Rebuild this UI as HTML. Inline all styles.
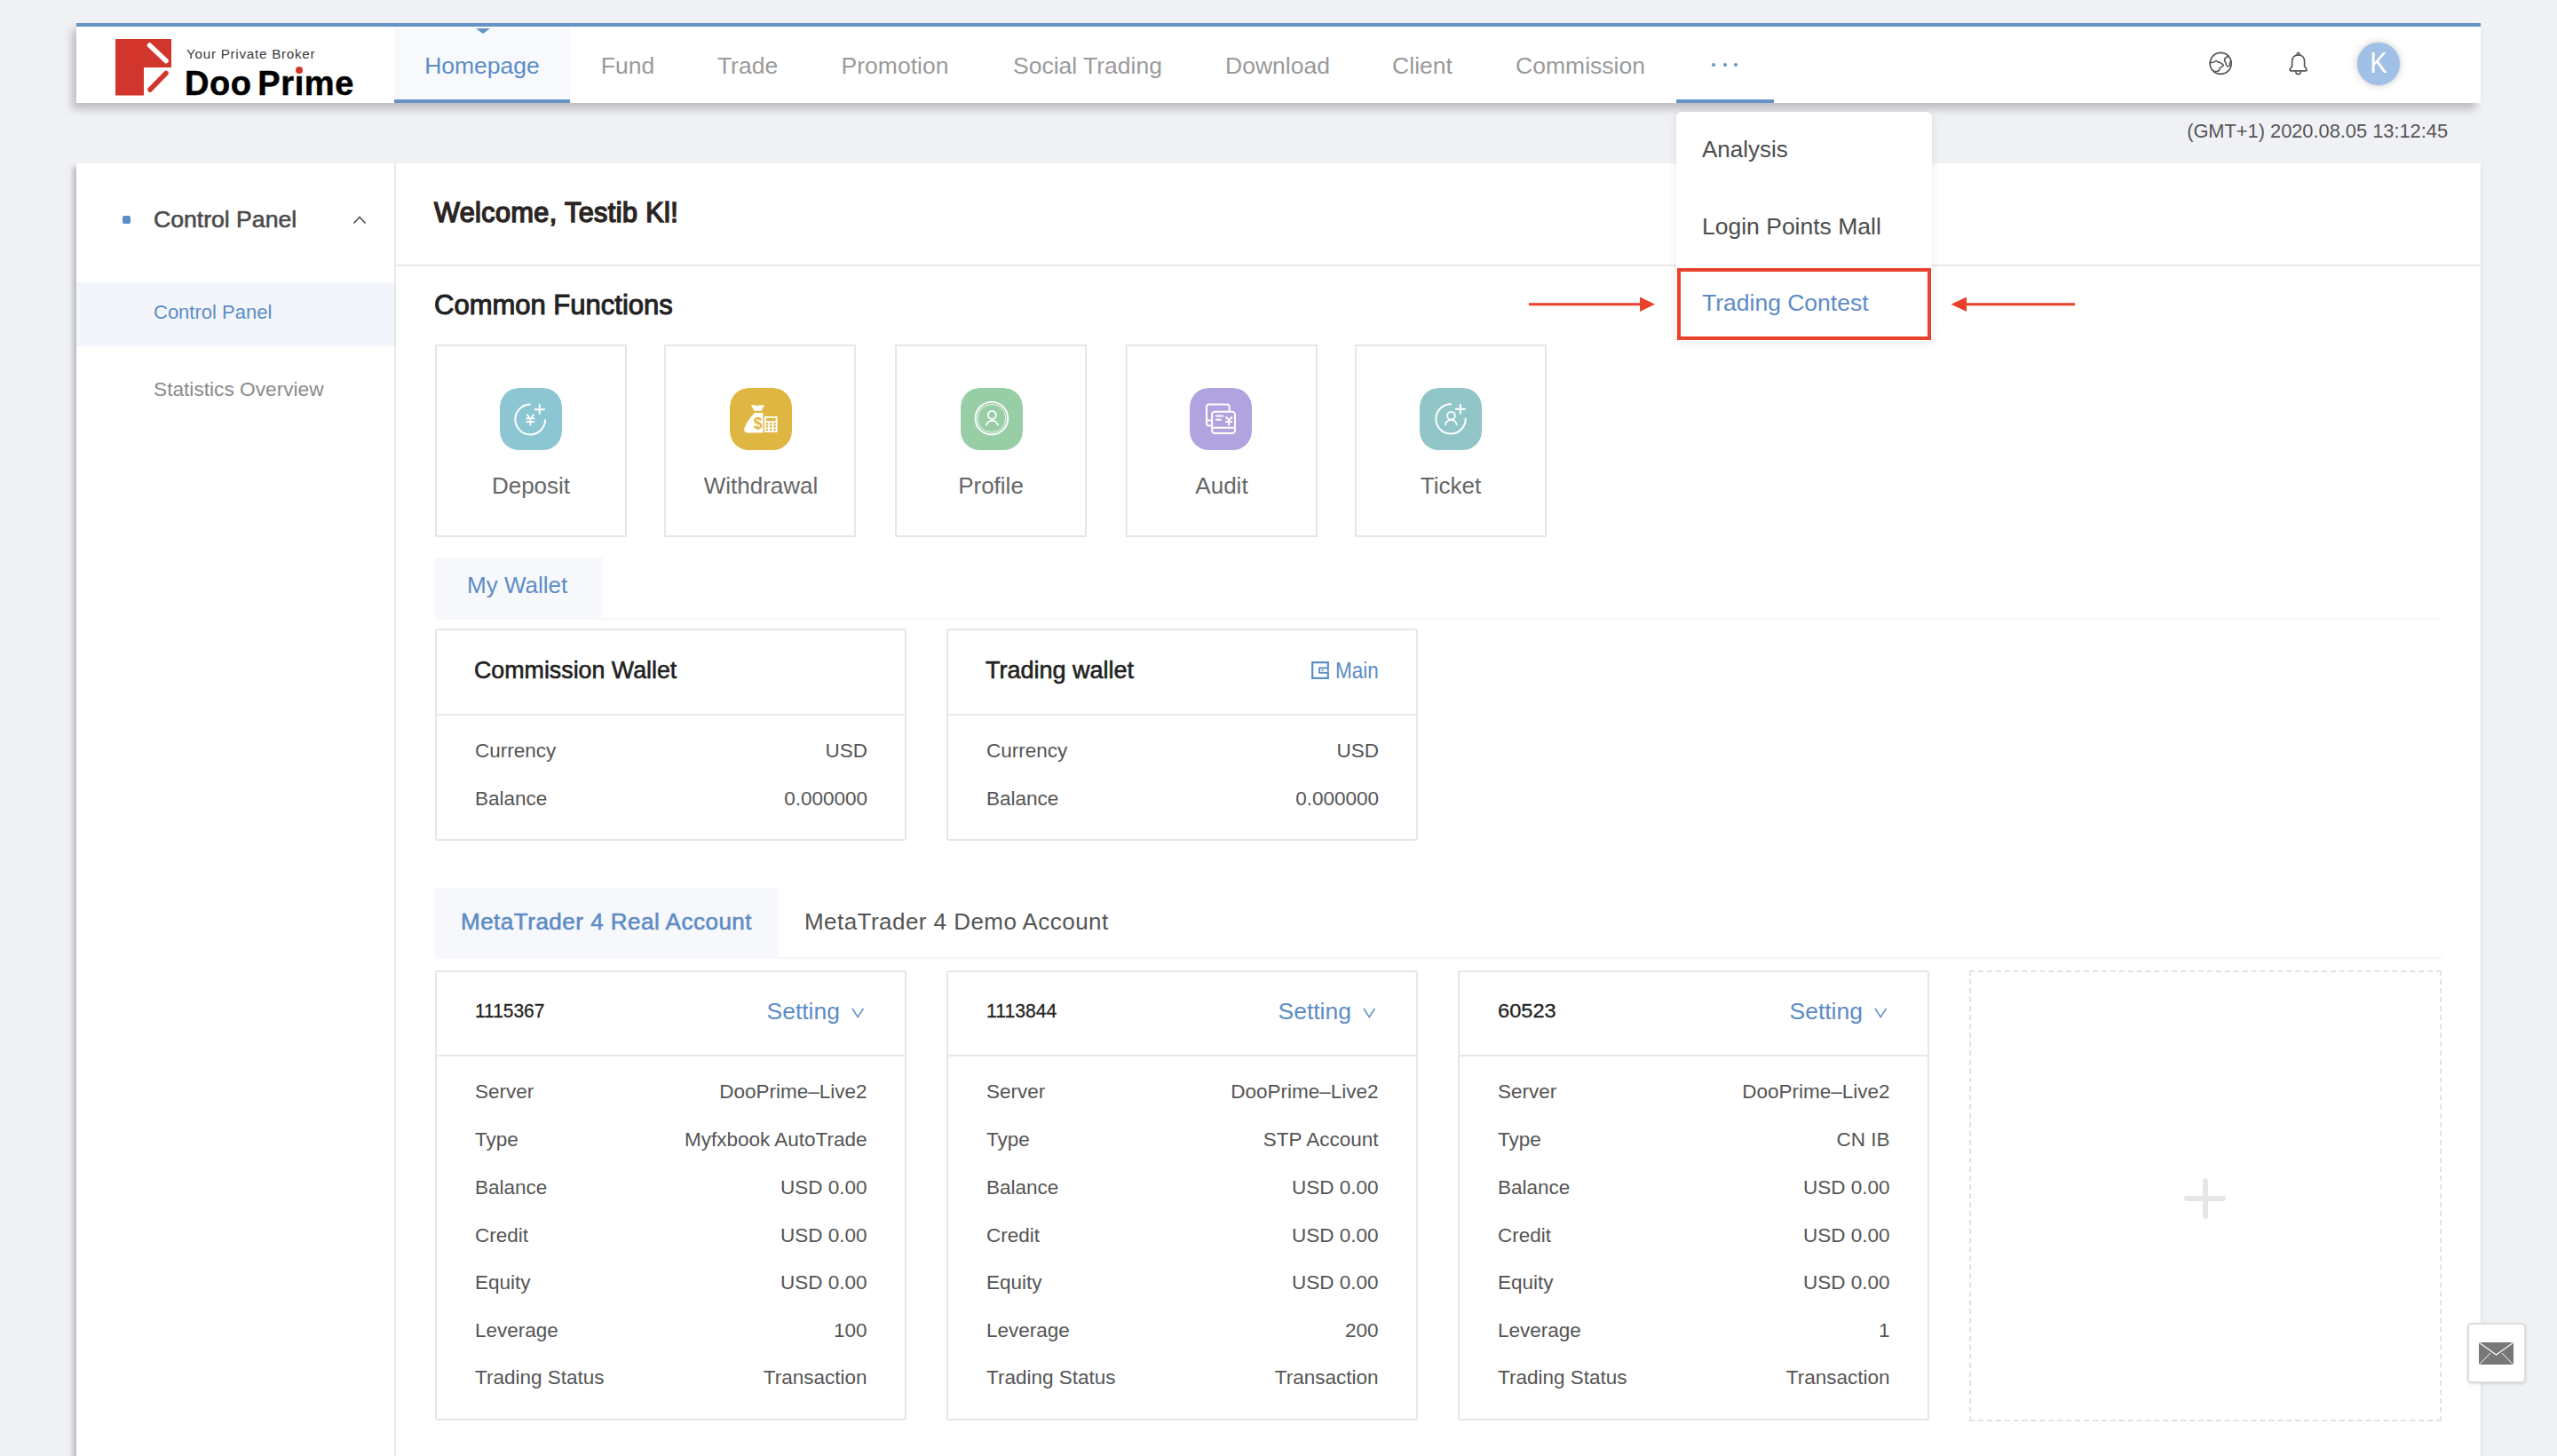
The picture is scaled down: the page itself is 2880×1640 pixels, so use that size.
<!DOCTYPE html>
<html><head><meta charset="utf-8">
<style>
html,body{margin:0;padding:0;}
body{width:2880px;height:1640px;overflow:hidden;background:#f0f1f5;position:relative;font-family:"Liberation Sans",sans-serif;}
.a{position:absolute;}
.t{position:absolute;white-space:nowrap;line-height:1;}
.c{text-align:center;}
.r{text-align:right;}
#hdr{left:86px;top:26px;width:2708px;height:86px;border-top:4px solid #6493c5;background:#fff;box-shadow:-5px 7px 9px rgba(0,0,0,0.21);}
#panel{left:86px;top:184px;width:2708px;height:1500px;background:#fff;box-shadow:-5px 3px 5px -1px rgba(0,0,0,0.22),3px 3px 4px -1px rgba(0,0,0,0.05);}
.nav{font-size:26.5px;color:#9a9a9a;}
.card{position:absolute;border:2px solid #e6e6e6;box-sizing:border-box;background:#fff;}
.ic{position:absolute;width:70px;height:70px;border-radius:21px;}
.lbl{font-size:26px;color:#666;}
.row{font-size:22.5px;color:#555;}
.blue{color:#5d8cc5 !important;}
</style></head><body>

<!-- HEADER -->
<div id="hdr" class="a"></div>
<!-- homepage active tab -->
<div class="a" style="left:444px;top:32px;width:198px;height:84px;background:#f7f9fd;"></div>
<div class="a" style="left:444px;top:112px;width:198px;height:4px;background:#6493c5;"></div>
<div class="a" style="left:536px;top:32px;width:0;height:0;border-left:8px solid transparent;border-right:8px solid transparent;border-top:6px solid #6493c5;"></div>
<div class="a" style="left:1888px;top:112px;width:110px;height:4px;background:#6493c5;"></div>

<div class="t c nav blue" style="left:343px;width:400px;top:61px;">Homepage</div>
<div class="t c nav" style="left:507px;width:400px;top:61px;">Fund</div>
<div class="t c nav" style="left:642px;width:400px;top:61px;">Trade</div>
<div class="t c nav" style="left:808px;width:400px;top:61px;">Promotion</div>
<div class="t c nav" style="left:1025px;width:400px;top:61px;">Social Trading</div>
<div class="t c nav" style="left:1239px;width:400px;top:61px;">Download</div>
<div class="t c nav" style="left:1402px;width:400px;top:61px;">Client</div>
<div class="t c nav" style="left:1580px;width:400px;top:61px;">Commission</div>
<!-- dots -->
<div class="a" style="left:1928px;top:71px;width:4px;height:4px;border-radius:2px;background:#6493c5;"></div>
<div class="a" style="left:1940.5px;top:71px;width:4px;height:4px;border-radius:2px;background:#6493c5;"></div>
<div class="a" style="left:1953.3px;top:71px;width:4px;height:4px;border-radius:2px;background:#6493c5;"></div>

<!-- logo -->
<svg class="a" style="left:128px;top:42px;" width="70" height="70" viewBox="128 42 70 70">
  <path d="M130 44 H193 V76 H162 V107.5 H130 Z" fill="#d2352c"/>
  <line x1="168.5" y1="51" x2="187" y2="68.5" stroke="#fff" stroke-width="5.5" stroke-linecap="round"/>
  <line x1="187" y1="82.5" x2="169" y2="101" stroke="#d2352c" stroke-width="5.5" stroke-linecap="round"/>
</svg>
<div class="t" style="left:210px;top:52.6px;font-size:15.2px;color:#3a3a3a;letter-spacing:0.75px;">Your Private Broker</div>
<div class="t" style="left:208px;top:75px;font-size:38px;font-weight:700;color:#000;letter-spacing:0.6px;word-spacing:-4.5px;-webkit-text-stroke:0.5px #000;">Doo Pr&#305;me</div>
<div class="a" style="left:332.5px;top:75px;width:8px;height:8px;border-radius:50%;background:#d2352c;"></div>

<!-- right icons -->
<svg class="a" style="left:2486px;top:57px;" width="30" height="30" viewBox="0 0 30 30">
  <circle cx="15.2" cy="14.4" r="12" fill="none" stroke="#555" stroke-width="1.7"/>
  <path d="M3.4 13.2 C5.5 13.6 7.6 13.6 8.8 12.2 C9.6 11.4 10.6 11.2 11.3 12.4 C11.9 13.4 12.6 13.3 13.4 13 C14.2 12.8 15 13.8 15.6 14.4 C16.4 15.1 17.6 15.2 18.3 16.4 C18.6 17.2 17.2 17.9 16.2 18.2 C14.9 18.5 14.2 19.4 14 20.8 C13.8 22.4 12.4 23.2 10.4 23.4 C9 23.5 8 23.3 7 22.8" fill="none" stroke="#555" stroke-width="1.5" stroke-linejoin="round" stroke-linecap="round"/>
  <path d="M23.8 6.3 C21.9 7.1 19.9 8.6 19.5 10.2 C19.2 11.6 19.9 12.6 20.8 13.6 C21.6 14.4 21.1 15.6 21.6 16.6 C22.2 17.6 23.6 17.9 24.8 17.2 C25.6 16.6 25.4 14.8 25.5 13.6 C25.6 12.4 26.4 12 26.9 11.6" fill="none" stroke="#555" stroke-width="1.5" stroke-linejoin="round" stroke-linecap="round"/>
</svg>
<svg class="a" style="left:2576px;top:57px;" width="26" height="30" viewBox="0 0 26 30">
  <circle cx="12.6" cy="3.6" r="1.4" fill="none" stroke="#555" stroke-width="1.4"/>
  <path d="M5.6 17.6 V12 C5.6 7.6 8.4 4.8 12.6 4.8 C16.8 4.8 19.6 7.6 19.6 12 V17.6 L21.6 20.4 C22.6 21.8 22 22.9 20.6 22.9 H4.6 C3.2 22.9 2.6 21.8 3.6 20.4 Z" fill="none" stroke="#555" stroke-width="1.7" stroke-linejoin="round"/>
  <path d="M9.6 23.4 C9.8 25.6 11.2 26.6 12.6 26.6 C14 26.6 15.4 25.6 15.6 23.4" fill="none" stroke="#555" stroke-width="1.5"/>
</svg>
<div class="a" style="left:2655px;top:48px;width:48px;height:48px;border-radius:50%;background:#a0c0e6;box-shadow:0 0 0 1px #e0e0e0,0 0 8px 1px rgba(0,0,0,0.16);"></div>
<div class="t c" style="left:2579px;width:200px;top:54.5px;font-size:32.5px;color:#fff;transform:scaleX(0.9);">K</div>

<div class="t r" style="right:123px;top:137px;font-size:21.8px;color:#555;">(GMT+1) 2020.08.05 13:12:45</div>

<!-- PANEL -->
<div id="panel" class="a"></div>
<div class="a" style="left:444px;top:184px;width:2px;height:1456px;background:#e8e8e8;"></div>
<div class="a" style="left:86px;top:318px;width:358px;height:72px;background:#f2f6fa;"></div>
<div class="a" style="left:138px;top:243px;width:9px;height:9px;border-radius:2px;background:#5b8ec8;"></div>
<div class="t" style="left:173px;top:234px;font-size:26.6px;color:#4a4a4a;-webkit-text-stroke:0.6px #4a4a4a;">Control Panel</div>
<svg class="a" style="left:396px;top:240px;" width="18" height="14" viewBox="0 0 18 14"><path d="M2.5 11.5 L9 4.5 L15.5 11.5" fill="none" stroke="#555" stroke-width="1.8"/></svg>
<div class="t blue" style="left:173px;top:341px;font-size:22px;">Control Panel</div>
<div class="t" style="left:173px;top:427px;font-size:22.7px;color:#8a8a8a;">Statistics Overview</div>

<div class="t" style="left:489px;top:224px;font-size:30.5px;letter-spacing:0.45px;color:#2b2523;-webkit-text-stroke:1.5px #2b2523;">Welcome, Testib Kl!</div>
<div class="a" style="left:446px;top:298px;width:2348px;height:2px;background:#e8e8e8;"></div>
<div class="t" style="left:489px;top:328px;font-size:31px;color:#222;-webkit-text-stroke:1px #222;">Common Functions</div>

<!-- function cards -->
<div class="card" style="left:490px;top:388px;width:216px;height:217px;"></div>
<div class="card" style="left:748px;top:388px;width:216px;height:217px;"></div>
<div class="card" style="left:1008px;top:388px;width:216px;height:217px;"></div>
<div class="card" style="left:1268px;top:388px;width:216px;height:217px;"></div>
<div class="card" style="left:1526px;top:388px;width:216px;height:217px;"></div>
<svg class="ic" style="left:563px;top:437px;" width="70" height="70" viewBox="0 0 70 70"><rect width="70" height="70" rx="21" fill="#8cc6d2"/>
 <g fill="none" stroke="#fff" stroke-width="2">
  <path d="M34.5 18.6 A16.9 16.9 0 1 0 51.1 35.4"/>
  <path d="M44.7 18.2 V29.7 M39 24.2 H50.8"/>
  <path d="M30.4 29.4 L34.3 35 L38.3 29.4 M34.3 35 V42.2 M29.4 34.4 H39.3 M29.4 38.2 H39.3" stroke-width="1.7"/>
 </g></svg>
<svg class="ic" style="left:822px;top:437px;" width="70" height="70" viewBox="0 0 70 70"><rect width="70" height="70" rx="21" fill="#dfb641"/>
 <path d="M23.9 19.6 C26.5 18.6 28.5 19.6 31.4 19.9 C34.4 19.6 36.4 18.6 38.9 19.6 L35.4 25.8 H27.4 Z" fill="#fff"/>
 <path d="M28 28 H36.4 C37 28 37.4 28.6 37.4 29.2 V50.6 H20 C16.6 50.6 15.4 47 16.8 44 C19 39 23 33 28 28 Z" fill="#fff"/>
 <text x="31.6" y="46.3" font-family="Liberation Sans" font-weight="700" font-size="17.5" fill="#dfb641" text-anchor="middle">$</text>
 <rect x="38.9" y="32" width="14.7" height="18" fill="#fff"/>
 <rect x="40.8" y="33.8" width="10.9" height="3.5" fill="#dfb641"/>
 <g fill="#dfb641"><circle cx="41.9" cy="40.2" r="1.3"/><circle cx="46.2" cy="40.2" r="1.3"/><circle cx="50.6" cy="40.2" r="1.3"/>
 <circle cx="41.9" cy="43.6" r="1.3"/><circle cx="46.2" cy="43.6" r="1.3"/><circle cx="50.6" cy="43.6" r="1.3"/>
 <circle cx="41.9" cy="47" r="1.3"/><circle cx="46.2" cy="47" r="1.3"/><circle cx="50.6" cy="47" r="1.3"/></g>
</svg>
<svg class="ic" style="left:1082px;top:437px;" width="70" height="70" viewBox="0 0 70 70"><rect width="70" height="70" rx="21" fill="#98cea6"/>
 <g fill="none" stroke="#fff">
  <circle cx="34.9" cy="34.2" r="18.3" stroke-width="1.9"/>
  <circle cx="34.9" cy="34.2" r="15.9" stroke-width="1" stroke-opacity="0.85"/>
  <circle cx="35.4" cy="30.4" r="4.5" stroke-width="1.8"/>
  <path d="M28.7 42.4 A6.8 6.8 0 0 1 42.1 42.4" stroke-width="1.8"/>
 </g></svg>
<svg class="ic" style="left:1340px;top:437px;" width="70" height="70" viewBox="0 0 70 70"><rect width="70" height="70" rx="21" fill="#b1a3df"/>
 <g fill="none" stroke="#fff" stroke-width="2">
  <path d="M25.1 42.4 H22 C20.2 42.4 19 41.2 19 39.4 V21.5 C19 19.7 20.2 18.5 22 18.5 H41.7 C43.5 18.5 44.7 19.7 44.7 21.5 V26.8"/>
  <path d="M19 36.6 H25.1"/>
  <rect x="25.1" y="26.8" width="25.9" height="24.3" rx="3.2" fill="#b1a3df"/>
  <path d="M25.1 44.8 H51"/>
  <path d="M29.2 31.4 H37.8 M29.2 35.8 H35.7"/>
  <path d="M40.4 32.4 L44.1 36.2 L48.1 32.4 M44.1 36.2 V42.6 M40.2 38 H48"/>
 </g></svg>
<svg class="ic" style="left:1599px;top:437px;" width="70" height="70" viewBox="0 0 70 70"><rect width="70" height="70" rx="21" fill="#92c5c8"/>
 <g fill="none" stroke="#fff" stroke-width="2">
  <path d="M35.8 18.2 A16.7 16.7 0 1 0 51.7 34"/>
  <path d="M45.9 17.9 V29.4 M40.1 23.7 H51.7"/>
  <circle cx="35.5" cy="31.2" r="4.4" stroke-width="1.8"/>
  <path d="M28.9 42.2 A6.45 6.45 0 0 1 41.8 42.2" stroke-width="1.8"/>
 </g></svg>
<div class="t c lbl" style="left:398px;width:400px;top:534px;">Deposit</div>
<div class="t c lbl" style="left:657px;width:400px;top:534px;">Withdrawal</div>
<div class="t c lbl" style="left:916px;width:400px;top:534px;">Profile</div>
<div class="t c lbl" style="left:1176px;width:400px;top:534px;">Audit</div>
<div class="t c lbl" style="left:1434px;width:400px;top:534px;">Ticket</div>

<!-- my wallet tab -->
<div class="a" style="left:490px;top:628px;width:188px;height:70px;background:#f7f8fc;"></div>
<div class="a" style="left:678px;top:696px;width:2072px;height:2px;background:#f4f5f9;"></div>
<div class="t blue" style="left:526px;top:646px;font-size:26px;">My Wallet</div>

<!-- wallet cards -->
<div class="card" style="left:490px;top:708px;width:531px;height:239px;border-radius:3px;"></div>
<div class="card" style="left:1066px;top:708px;width:531px;height:239px;border-radius:3px;"></div>
<div class="a" style="left:492px;top:804px;width:527px;height:2px;background:#e8e8e8;"></div>
<div class="a" style="left:1068px;top:804px;width:527px;height:2px;background:#e8e8e8;"></div>
<div class="t" style="left:534px;top:742px;font-size:26.8px;color:#222;-webkit-text-stroke:0.6px #222;">Commission Wallet</div>
<div class="t" style="left:1110px;top:742px;font-size:27px;color:#222;-webkit-text-stroke:0.6px #222;">Trading wallet</div>
<svg class="a" style="left:1476px;top:744px;" width="22" height="22" viewBox="0 0 22 22"><path d="M19.8 8.4 V2.2 H2.2 V19.8 H19.8 V13.8" fill="none" stroke="#5b8ec8" stroke-width="2.2"/><rect x="10" y="8.4" width="9.8" height="5.4" fill="none" stroke="#5b8ec8" stroke-width="1.8"/><rect x="12.6" y="10.3" width="2" height="1.6" fill="#5b8ec8"/></svg>
<div class="t blue" style="left:1504px;top:742px;font-size:26px;transform:scaleX(0.865);transform-origin:0 0;">Main</div>

<div class="t row" style="left:535px;top:835px;">Currency</div>
<div class="t row" style="left:535px;top:889px;">Balance</div>
<div class="t row r" style="right:1903px;top:835px;">USD</div>
<div class="t row r" style="right:1903px;top:889px;">0.000000</div>
<div class="t row" style="left:1111px;top:835px;">Currency</div>
<div class="t row" style="left:1111px;top:889px;">Balance</div>
<div class="t row r" style="right:1327px;top:835px;">USD</div>
<div class="t row r" style="right:1327px;top:889px;">0.000000</div>

<!-- MT4 tabs -->
<div class="a" style="left:490px;top:1000px;width:386px;height:80px;background:#f7f8fc;"></div>
<div class="a" style="left:876px;top:1078px;width:1874px;height:2px;background:#f3f4f8;"></div>
<div class="t blue" style="left:519px;top:1025px;font-size:26px;letter-spacing:0.5px;-webkit-text-stroke:0.6px #5d8cc5;">MetaTrader 4 Real Account</div>
<div class="t" style="left:906px;top:1025px;font-size:26px;letter-spacing:0.45px;color:#555;">MetaTrader 4 Demo Account</div>

<div id="accts"></div>
<div class="card" style="left:490px;top:1093px;width:531px;height:507px;border-radius:3px;"></div>
<div class="a" style="left:492px;top:1188px;width:527px;height:2px;background:#e8e8e8;"></div>
<div class="t" style="left:535px;top:1128px;font-size:22.5px;color:#222;-webkit-text-stroke:0.3px #222;transform:scaleX(0.93);transform-origin:0 0;">1115367</div>
<div class="t r blue" style="right:1934px;top:1126px;font-size:26.5px;">Setting</div>
<svg class="a" style="left:958px;top:1133px;" width="18" height="16" viewBox="0 0 18 16"><path d="M2 3 L8.2 12.6 L14.4 3" fill="none" stroke="#5d8cc5" stroke-width="1.5"/></svg>
<div class="t row" style="left:535px;top:1219.0px;">Server</div>
<div class="t row r" style="right:1903.5px;top:1219.0px;">DooPrime&ndash;Live2</div>
<div class="t row" style="left:535px;top:1273.2px;">Type</div>
<div class="t row r" style="right:1903.5px;top:1273.2px;">Myfxbook AutoTrade</div>
<div class="t row" style="left:535px;top:1327.0px;">Balance</div>
<div class="t row r" style="right:1903.5px;top:1327.0px;">USD 0.00</div>
<div class="t row" style="left:535px;top:1380.5px;">Credit</div>
<div class="t row r" style="right:1903.5px;top:1380.5px;">USD 0.00</div>
<div class="t row" style="left:535px;top:1434.0px;">Equity</div>
<div class="t row r" style="right:1903.5px;top:1434.0px;">USD 0.00</div>
<div class="t row" style="left:535px;top:1487.5px;">Leverage</div>
<div class="t row r" style="right:1903.5px;top:1487.5px;">100</div>
<div class="t row" style="left:535px;top:1541.0px;">Trading Status</div>
<div class="t row r" style="right:1903.5px;top:1541.0px;">Transaction</div>
<div class="card" style="left:1066px;top:1093px;width:531px;height:507px;border-radius:3px;"></div>
<div class="a" style="left:1068px;top:1188px;width:527px;height:2px;background:#e8e8e8;"></div>
<div class="t" style="left:1111px;top:1128px;font-size:22.5px;color:#222;-webkit-text-stroke:0.3px #222;transform:scaleX(0.94);transform-origin:0 0;">1113844</div>
<div class="t r blue" style="right:1358px;top:1126px;font-size:26.5px;">Setting</div>
<svg class="a" style="left:1534px;top:1133px;" width="18" height="16" viewBox="0 0 18 16"><path d="M2 3 L8.2 12.6 L14.4 3" fill="none" stroke="#5d8cc5" stroke-width="1.5"/></svg>
<div class="t row" style="left:1111px;top:1219.0px;">Server</div>
<div class="t row r" style="right:1327.5px;top:1219.0px;">DooPrime&ndash;Live2</div>
<div class="t row" style="left:1111px;top:1273.2px;">Type</div>
<div class="t row r" style="right:1327.5px;top:1273.2px;">STP Account</div>
<div class="t row" style="left:1111px;top:1327.0px;">Balance</div>
<div class="t row r" style="right:1327.5px;top:1327.0px;">USD 0.00</div>
<div class="t row" style="left:1111px;top:1380.5px;">Credit</div>
<div class="t row r" style="right:1327.5px;top:1380.5px;">USD 0.00</div>
<div class="t row" style="left:1111px;top:1434.0px;">Equity</div>
<div class="t row r" style="right:1327.5px;top:1434.0px;">USD 0.00</div>
<div class="t row" style="left:1111px;top:1487.5px;">Leverage</div>
<div class="t row r" style="right:1327.5px;top:1487.5px;">200</div>
<div class="t row" style="left:1111px;top:1541.0px;">Trading Status</div>
<div class="t row r" style="right:1327.5px;top:1541.0px;">Transaction</div>
<div class="card" style="left:1642px;top:1093px;width:531px;height:507px;border-radius:3px;"></div>
<div class="a" style="left:1644px;top:1188px;width:527px;height:2px;background:#e8e8e8;"></div>
<div class="t" style="left:1687px;top:1128px;font-size:22.5px;color:#222;-webkit-text-stroke:0.3px #222;transform:scaleX(1.05);transform-origin:0 0;">60523</div>
<div class="t r blue" style="right:782px;top:1126px;font-size:26.5px;">Setting</div>
<svg class="a" style="left:2110px;top:1133px;" width="18" height="16" viewBox="0 0 18 16"><path d="M2 3 L8.2 12.6 L14.4 3" fill="none" stroke="#5d8cc5" stroke-width="1.5"/></svg>
<div class="t row" style="left:1687px;top:1219.0px;">Server</div>
<div class="t row r" style="right:751.5px;top:1219.0px;">DooPrime&ndash;Live2</div>
<div class="t row" style="left:1687px;top:1273.2px;">Type</div>
<div class="t row r" style="right:751.5px;top:1273.2px;">CN IB</div>
<div class="t row" style="left:1687px;top:1327.0px;">Balance</div>
<div class="t row r" style="right:751.5px;top:1327.0px;">USD 0.00</div>
<div class="t row" style="left:1687px;top:1380.5px;">Credit</div>
<div class="t row r" style="right:751.5px;top:1380.5px;">USD 0.00</div>
<div class="t row" style="left:1687px;top:1434.0px;">Equity</div>
<div class="t row r" style="right:751.5px;top:1434.0px;">USD 0.00</div>
<div class="t row" style="left:1687px;top:1487.5px;">Leverage</div>
<div class="t row r" style="right:751.5px;top:1487.5px;">1</div>
<div class="t row" style="left:1687px;top:1541.0px;">Trading Status</div>
<div class="t row r" style="right:751.5px;top:1541.0px;">Transaction</div>
<div class="a" style="left:2218px;top:1093px;width:532px;height:508px;box-sizing:border-box;border:2px dashed #e2e2e2;"></div>
<div class="a" style="left:2460px;top:1347px;width:47px;height:6px;border-radius:3px;background:#e6e6e6;"></div>
<div class="a" style="left:2481px;top:1327px;width:6px;height:46px;border-radius:3px;background:#e6e6e6;"></div>

<!-- dropdown -->
<div class="a" style="left:1888px;top:126px;width:288px;height:258px;background:#fff;border-radius:6px;box-shadow:0 2px 10px rgba(0,0,0,0.10);"></div>
<div class="t" style="left:1917px;top:155px;font-size:26px;color:#4d4d4d;">Analysis</div>
<div class="t" style="left:1917px;top:242px;font-size:26.5px;color:#4d4d4d;">Login Points Mall</div>
<div class="t blue" style="left:1917px;top:328px;font-size:26.5px;">Trading Contest</div>
<div class="a" style="left:1889px;top:302px;width:286px;height:81px;box-sizing:border-box;border:4px solid #e8412c;"></div>

<!-- arrows -->
<svg class="a" style="left:1715px;top:330px;" width="160" height="26" viewBox="1715 330 160 26">
  <line x1="1722" y1="342.7" x2="1850" y2="342.7" stroke="#e8412c" stroke-width="3"/>
  <path d="M1847 334.5 L1864 342.7 L1847 351 Z" fill="#e8412c"/>
</svg>
<svg class="a" style="left:2190px;top:330px;" width="160" height="26" viewBox="2190 330 160 26">
  <line x1="2212" y1="342.7" x2="2337" y2="342.7" stroke="#e8412c" stroke-width="3"/>
  <path d="M2215 334.5 L2197.5 342.7 L2215 351 Z" fill="#e8412c"/>
</svg>

<!-- mail button -->
<div class="a" style="left:2779px;top:1490px;width:66px;height:68px;box-sizing:border-box;border:2px solid #ddd;border-radius:5px;background:#fff;box-shadow:0 1px 3px rgba(0,0,0,0.15);"></div>
<svg class="a" style="left:2792px;top:1512px;" width="40" height="26" viewBox="0 0 40 26">
  <rect x="0" y="0" width="39" height="25" fill="#777"/>
  <path d="M0.5 0.5 L19.5 14 L38.5 0.5" fill="none" stroke="#fff" stroke-width="1.2"/>
  <path d="M0.5 25 L13 12 M38.5 25 L26 12" fill="none" stroke="#fff" stroke-width="1"/>
</svg>

</body></html>
